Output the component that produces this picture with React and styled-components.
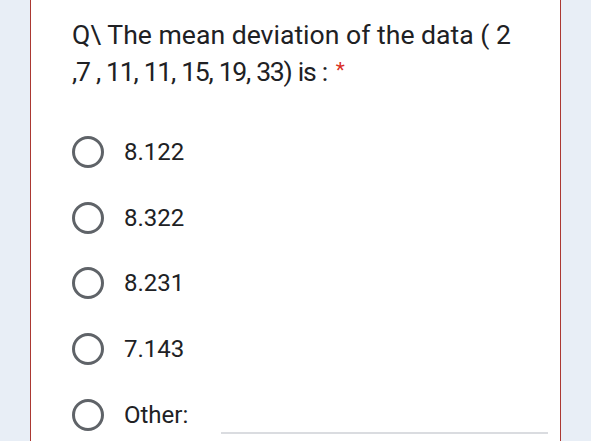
import React from 'react';
import styled, { createGlobalStyle } from 'styled-components';

const GlobalStyle = createGlobalStyle`
  html, body {
    margin: 0;
    padding: 0;
    background: #e8eef6;
    overflow: hidden;
  }
`;

const Page = styled.div`
  height: 441px;
  padding-left: 30px;
  display: flex;
`;

const Card = styled.div`
  width: 476px;
  height: 100%;
  background: #fff;
  border-left: 1px solid #ab3832;
  border-right: 1px solid #ab3832;
  padding: 16px 12px 0 41px;
  box-sizing: content-box;
  font-family: Roboto, "Liberation Sans", sans-serif;
  color: #202124;
`;

const Question = styled.div`
  font-size: 26.6px;
  line-height: 37px;
  margin-bottom: 43px;
  white-space: nowrap;
`;

const Line = styled.div`
  letter-spacing: ${p => p.$spacing || 0}px;
  word-spacing: ${p => p.$words || 0}px;
`;

const Star = styled.span`
  color: #d93025;
  font-size: 21px;
  margin-left: 9px;
  letter-spacing: 0;
  position: relative;
  top: -4px;
`;

const Options = styled.div`
  display: flex;
  flex-direction: column;
  gap: 33.7px;
`;

const Option = styled.label`
  display: flex;
  align-items: center;
  height: 32px;
  font-size: 24px;
`;

const Radio = styled.span`
  width: 26px;
  height: 26px;
  border: 3px solid #5f6368;
  border-radius: 50%;
  flex: none;
  margin-right: 20px;
`;

const OtherInput = styled.span`
  flex: 1;
  align-self: flex-end;
  height: 2px;
  background: #dadce0;
  margin: 0 0 -3px 33px;
`;

const answers = ['8.122', '8.322', '8.231', '7.143'];

export default function App() {
  return (
    <Page>
      <GlobalStyle />
      <Card>
        <Question>
          <Line>Q\ The mean deviation of the data ( 2</Line>
          <Line $spacing={-1.3} $words={1}>
            ,7 , 11, 11, 15, 19, 33) is :<Star>*</Star>
          </Line>
        </Question>
        <Options>
          {answers.map(a => (
            <Option key={a}>
              <Radio />
              {a}
            </Option>
          ))}
          <Option>
            <Radio />
            Other:
            <OtherInput />
          </Option>
        </Options>
      </Card>
    </Page>
  );
}
